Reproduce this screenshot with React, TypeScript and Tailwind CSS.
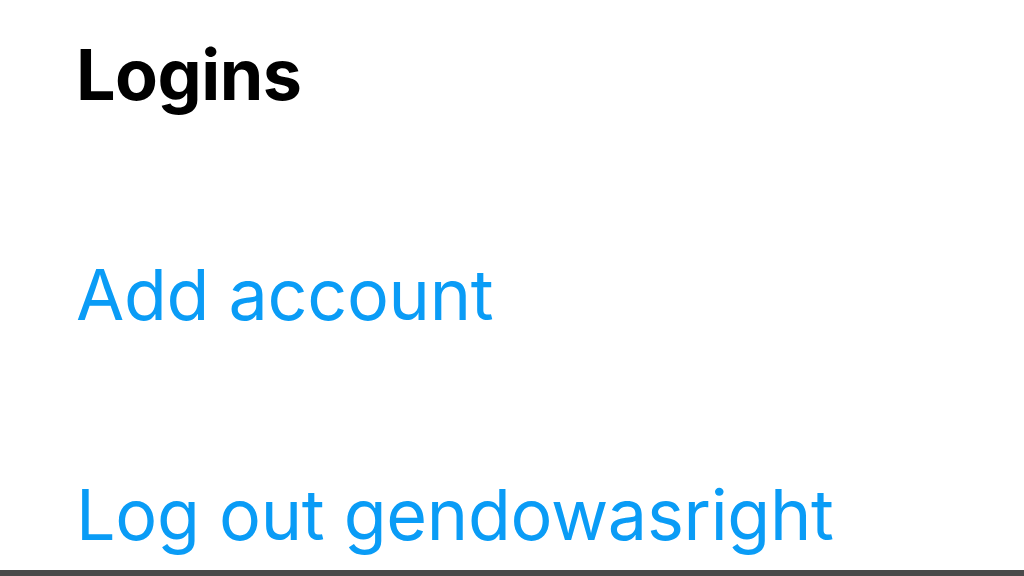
export default function App() {
  return (
    <div className="w-[1024px] h-[576px] bg-white flex flex-col overflow-hidden" style={{ fontFamily: "Inter, 'Noto Sans', sans-serif" }}>
      <div className="flex-1 flex flex-col pl-[76px] pt-[40px] gap-[150px] tracking-[-0.3px]">
        <h1 className="text-[70px] leading-[70px] font-bold text-black tracking-[-0.5px]">Logins</h1>
        <button className="text-left text-[70px] leading-[70px] text-[#0a9cf6]">Add account</button>
        <button className="text-left text-[70px] leading-[70px] text-[#0a9cf6]">Log out gendowasright</button>
      </div>
      <div className="h-[6px] bg-[#4a4a4a] shrink-0" />
    </div>
  );
}
